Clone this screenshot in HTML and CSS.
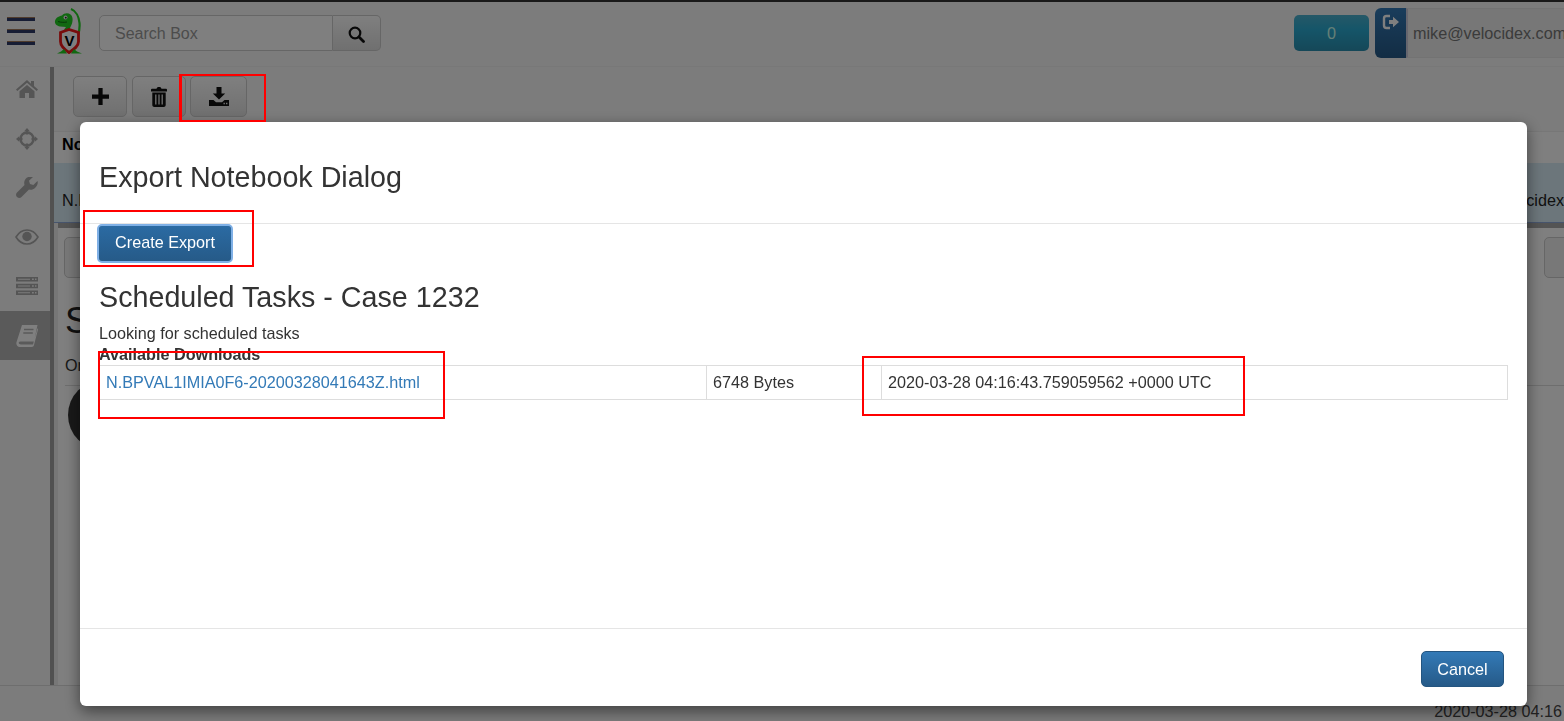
FILE: index.html
```html
<!DOCTYPE html>
<html lang="en">
<head>
<meta charset="utf-8">
<title>Export Notebook Dialog</title>
<link rel="stylesheet" href="styles.css">
</head>
<body>
<div class="app">
  <header class="topbar">
    <div class="burger"><span></span><span></span><span></span></div>
    <svg class="logo" viewBox="0 0 28 46" width="28" height="46">
      <path d="M17 1c5 2 8 8 8.500 14 .3 4 0 8-1.500 12" fill="none" stroke="#22d022" stroke-width="2.200"/>
      <path d="M1 13c.5-3 4-5 7-5.500 2-2.500 6-3 8.500-1 2.500 2 2.500 6 1.500 9-1 3-2.500 5-3.500 7l-3 .5c-1 0-1.500-.5-1-2l1.500-2-6-.5C3 18 .5 16 1 13z" fill="#22d022"/>
      <circle cx="11.500" cy="9.500" r="2" fill="#f0f0f0"/>
      <circle cx="11.800" cy="9.700" r=".9" fill="#222"/>
      <path d="M4 13.500c3 1 6 1 9 .5" fill="none" stroke="#0a400a" stroke-width=".7"/>
      <path d="M6.500 24.500l8.500-3 9.500 3v9c0 5-5 8-9.500 11-4.500-3-8.500-6-8.500-11z" fill="#fff" stroke="#f01818" stroke-width="2.800"/>
      <text x="15.500" y="37.500" class="logo-v">V</text>
      <path d="M3 45.500l4-2 3-2.500 3 4.500zM17 45.500l3-4.500 3 2.500 5 2z" fill="#22d022"/>
    </svg>
    <div class="search">
      <div class="search-input">Search Box</div>
      <div class="search-btn">
        <svg viewBox="0 0 17 17" width="17" height="17"><circle cx="7" cy="7" r="5.300" fill="none" stroke="#111" stroke-width="2.200"/><path d="M11 11l4.500 4.500" stroke="#111" stroke-width="2.800" stroke-linecap="round"/></svg>
      </div>
    </div>
    <div class="top-right">
      <div class="count">0</div>
      <div class="user">
        <div class="logout">
          <svg viewBox="0 0 18 18" width="18" height="18"><path d="M8 3H4.500C3 3 2 4 2 5.500v7C2 14 3 15 4.500 15H8" fill="none" stroke="#fff" stroke-width="2.400"/><path d="M7 7h4V3.800L17 9l-6 5.200V11H7z" fill="#fff"/></svg>
        </div>
        <div class="user-name">mike@velocidex.com</div>
      </div>
    </div>
  </header>
  <div class="middle">
    <nav class="sidebar">
      <div class="nav-item"><svg viewBox="0 0 22 20" width="22" height="20"><path d="M11 1L0 10.500l1.300 1.500L11 3.800l9.700 8.200 1.300-1.500-4-3.500V2h-3v2.800z" fill="#aaa"/><path d="M3.500 12.200L11 6l7.500 6.200V19h-5.500v-5H9v5H3.500z" fill="#aaa"/></svg></div>
      <div class="nav-item"><svg viewBox="0 0 22 22" width="22" height="22"><path d="M11 0l2.800 3.200h-1.600v3.300H9.800V3.200H8.200zM11 22l-2.800-3.200h1.600v-3.300h2.400v3.300h1.600zM0 11l3.200-2.800v1.600h3.300v2.400H3.200v1.600zM22 11l-3.200 2.800v-1.600h-3.300V9.800h3.300V8.200z" fill="#aaa"/><circle cx="11" cy="11" r="6.500" fill="none" stroke="#aaa" stroke-width="2.400"/></svg></div>
      <div class="nav-item"><svg viewBox="0 0 22 22" width="22" height="22"><path d="M21.500 4l-4.200 4-3.300-1-1-3.300L17 0c-3-1-6 0-7.500 2C8 4 8 6.500 8.500 8L1 15.500c-1.300 1.300-1.300 3 0 4.500 1.500 1.300 3.200 1.300 4.500 0L13 12.500c1.800.6 4.200.3 6-1.500 2-1.800 3.300-4.500 2.500-7z" fill="#aaa"/></svg></div>
      <div class="nav-item"><svg viewBox="0 0 24 16" width="24" height="16"><path d="M1 8C4 3 8 1 12 1s8 2 11 7c-3 5-7 7-11 7S4 13 1 8z" fill="none" stroke="#aaa" stroke-width="1.600"/><circle cx="12" cy="7.500" r="4.700" fill="#aaa"/></svg></div>
      <div class="nav-item"><svg viewBox="0 0 22 20" width="22" height="20"><path d="M0 1h22v4.500H0zM0 7.700h22v4.500H0zM0 14.500h22V19H0z" fill="#aaa"/><path d="M16 2.500h1.800v1.500H16zM19 2.500h1.500v1.500H19zM16 9.200h1.800v1.500H16zM19 9.200h1.500v1.500H19zM16 16h1.800v1.500H16zM19 16h1.500v1.500H19zM2 2.800h12v1H2zM2 9.500h12v1H2zM2 16.300h12v1H2z" fill="#f8f8f8"/></svg></div>
      <div class="nav-item active"><svg viewBox="0 0 22 22" width="22" height="22"><path d="M6 0h15.500L18 16.500H4.500c-1.500 0-2 1-1.700 1.800.2.700 1 1.200 2 1.200H17L21.500 3 22 4.500 18 20c-.2 1.200-1 2-2.500 2H4c-2.300 0-4-2-3.600-4.500z" fill="#fff"/><path d="M8 4.500h9.500M7.300 8h9.500" stroke="#b4b4b4" stroke-width="1.500"/></svg></div>
    </nav>
    <main class="content">
      <div class="toolbar">
        <button class="tool tool-a"><svg viewBox="0 0 16 16" width="17" height="17"><path d="M6 0h4v6h6v4h-6v6H6v-6H0V6h6z" fill="#111"/></svg></button>
        <button class="tool tool-a"><svg viewBox="0 0 16 20" width="16" height="20"><path d="M5.500 1.700C6 .5 6.500 0 7.500 0h1c1 0 1.500.5 2 1.700H15a1 1 0 0 1 1 1V4.500H0V2.700a1 1 0 0 1 1-1z" fill="#111"/><path d="M1.300 5.500h13.400V18c0 1.100-.9 2-2 2H3.300c-1.100 0-2-.9-2-2z" fill="#111"/><path d="M4.800 7.500v10M8 7.500v10M11.200 7.500v10" stroke="#e4e4e4" stroke-width="1.300"/></svg></button>
        <button class="tool tool-b"><svg viewBox="0 0 20 19" width="20" height="19"><path d="M7.500 0h5v6.500h3.700L10 12.500 3.800 6.500h3.700z" fill="#111"/><path d="M0 13h4.500l2.500 2.300h6L15.500 13H20v6H0z" fill="#111"/><path d="M14.500 15.800h1.400v1.400h-1.400zM17 15.800h1.400v1.400H17z" fill="#e4e4e4"/></svg></button>
      </div>
      <div class="notebook-head">Notebook</div>
      <div class="notebook-row"><span>N.BPVAL1</span><span>mike@velocidex</span></div>
      <section class="cell">
        <div class="cell-bar"><div class="cell-btn"></div><div class="cell-btn cell-btn-r"></div></div>
        <h1 class="cell-title">Scheduled</h1>
        <p class="cell-text">On</p>
        <hr class="cell-rule">
        <div class="avatar"></div>
      </section>
    </main>
  </div>
  <footer class="statusbar">2020-03-28 04:16</footer>
</div>

<div class="backdrop"></div>

<div class="modal">
  <div class="modal-head"><h3 class="modal-title">Export Notebook Dialog</h3></div>
  <div class="modal-body">
    <button class="btn-create">Create Export</button>
    <h2 class="report-title">Scheduled Tasks - Case 1232</h2>
    <div class="report-line">Looking for scheduled tasks</div>
    <div class="report-strong">Available Downloads</div>
    <table class="downloads">
      <tr>
        <td class="col-name"><a href="#">N.BPVAL1IMIA0F6-20200328041643Z.html</a></td>
        <td class="col-size">6748 Bytes</td>
        <td>2020-03-28 04:16:43.759059562 +0000 UTC</td>
      </tr>
    </table>
  </div>
  <div class="modal-foot"><button class="btn-cancel">Cancel</button></div>
</div>

<div class="mark mark-1"></div>
<div class="mark mark-2"></div>
<div class="mark mark-3"></div>
<div class="mark mark-4"></div>
</body>
</html>
```

FILE: styles.css
```css
* { box-sizing: border-box; }
html, body { margin: 0; height: 100%; overflow: hidden; }
body { font-family: "Liberation Sans", Arial, sans-serif; font-size: 16.2px; color: #333; background: #fff; }

.app { height: 721px; display: flex; flex-direction: column; border-top: 2px solid #333; }

.topbar { height: 65px; flex: none; display: flex; align-items: flex-start; background: #f8f8f8; border-bottom: 1px solid #f0f0f0; }
.burger { width: 28px; margin: 15px 0 0 7px; display: flex; flex-direction: column; gap: 8px; }
.burger span { height: 4px; background: #2e3a68; border-top: 1px solid #a0795a; }
.logo { margin: 6px 0 0 19px; flex: none; }
.logo-v { font-family: "Liberation Sans", sans-serif; font-size: 15px; font-weight: 700; fill: #000; text-anchor: middle; }
.search { display: flex; margin: 13px 0 0 17px; height: 36px; }
.search-input { width: 234px; padding: 9px 15px; font-size: 16px; color: #999; background: #fff; border: 1px solid #ccc; border-radius: 5px 0 0 5px; }
.search-btn { width: 48px; display: flex; align-items: center; justify-content: center; padding-top: 2px; border: 1px solid #ccc; border-left: 0; border-radius: 0 5px 5px 0; background: linear-gradient(#fff, #e0e0e0); }
.top-right { margin-left: auto; display: flex; align-items: flex-start; }
.count { width: 75px; height: 36px; margin: 13px 6px 0 0; border-radius: 5px; background: linear-gradient(#4cb1cf, #2aabd2 40%, #2b8fb0); color: #cfe; text-align: center; line-height: 36px; }
.user { display: flex; height: 50px; margin-top: 6px; width: 189px; }
.logout { width: 31px; height: 50px; flex: none; border-radius: 6px 0 0 6px; background: linear-gradient(#337ab7, #265a88); padding: 5px 0 0 7px; }
.user-name { flex: 1; white-space: nowrap; background: #eee; padding: 15px 0 0 5px; color: #777; border: 1px solid #e6e6e6; border-left: 2px solid #ccd; }

.middle { flex: 1; display: flex; min-height: 0; }
.sidebar { width: 54px; flex: none; background: #f8f8f8; border-right: 4px solid #a2a2a2; }
.nav-item { height: 49px; display: flex; align-items: center; justify-content: center; padding-left: 3px; }
.nav-item:first-child { margin-top: -3px; margin-bottom: 1px; }
.nav-item.active { background: #b4b4b4; margin-top: 1px; }

.content { flex: 1; min-width: 0; overflow: hidden; background: #eee; }
.toolbar { height: 65px; display: flex; gap: 5px; padding: 9px 0 0 19px; background: #f8f8f8; border-bottom: 1px solid #eee; }
.tool { height: 41px; border: 1px solid #ccc; border-radius: 5px; background: linear-gradient(#fff, #e0e0e0); display: flex; align-items: center; justify-content: center; padding: 0; }
.tool-a { width: 54px; }
.tool-b { width: 57px; margin-left: -1px; }
.notebook-head { height: 31px; padding: 3px 8px; font-weight: 700; color: #000; background: #fff; white-space: nowrap; }
.notebook-row { height: 60px; padding: 28px 0 0 8px; display: flex; justify-content: space-between; background: #d9edf7; border-bottom: 1px solid #8fa8d8; color: #222; white-space: nowrap; }
.cell { margin-left: 4px; border-top: 5px solid #a8a8a8; background: #fff; padding: 9px 0 0 6px; height: 500px; }
.cell-bar { display: flex; justify-content: space-between; }
.cell-btn { width: 60px; height: 41px; border: 1px solid #ccc; border-radius: 5px; background: #f0f0f0; }
.cell-btn-r { margin-right: -40px; }
.cell-title { margin: 23px 0 0 1px; font-size: 36px; font-weight: 400; color: #222; line-height: 40px; }
.cell-text { margin: 14px 0 0 1px; line-height: 20px; }
.cell-rule { margin: 10px 0 0 1px; border: 0; border-top: 1px solid #ddd; }
.avatar { width: 70px; height: 70px; margin: -6px 0 0 4px; border-radius: 50%; background: #333; }

.statusbar { height: 36px; flex: none; margin-top: -2px; background: #f8f8f8; border-top: 1px solid #ddd; padding: 16px 2px 0 0; text-align: right; color: #444; white-space: nowrap; }

.backdrop { position: fixed; inset: 0; background: rgba(0, 0, 0, .5); }

.modal { position: fixed; left: 80px; top: 122px; width: 1447px; height: 584px; display: flex; flex-direction: column; background: #fff; border-radius: 6px; box-shadow: 0 5px 15px rgba(0, 0, 0, .5); }
.modal-head { height: 102px; flex: none; padding: 37px 19px 0; border-bottom: 1px solid #e5e5e5; }
.modal-title { margin: 0; font-size: 28.7px; font-weight: 400; line-height: 36px; color: #333; }
.modal-body { flex: 1; padding: 1px 19px 0; min-height: 0; }
.btn-create { display: block; width: 134px; height: 37px; margin-left: -1px; padding: 0 0 2px; font: inherit; color: #fff; border: 1px solid #245580; border-radius: 4px; background: linear-gradient(#2b6ba3, #265a88); outline: 2px solid #7fb0e6; outline-offset: -1px; }
.report-title { margin: 17px 0 0; font-size: 28.7px; font-weight: 400; line-height: 36px; color: #333; }
.report-line { margin-top: 8px; line-height: 20px; }
.report-strong { font-weight: 700; line-height: 20px; margin-top: 1px; }
.downloads { width: 1409px; margin-top: 1px; border-collapse: collapse; table-layout: fixed; }
.downloads td { height: 34px; padding: 0 6px; border: 1px solid #ddd; }
.col-name { width: 607px; }
.col-size { width: 175px; }
.downloads a { color: #337ab7; text-decoration: none; }
.modal-foot { height: 78px; flex: none; padding: 22px 23px 0 0; border-top: 1px solid #e5e5e5; text-align: right; }
.btn-cancel { width: 83px; height: 36px; padding: 0; font: inherit; color: #fff; border: 1px solid #245580; border-radius: 5px; background: linear-gradient(#337ab7, #265a88); }

.mark { position: fixed; border: 2px solid #f00; }
.mark-1 { left: 179px; top: 74px; width: 87px; height: 48px; border-left-width: 3px; }
.mark-2 { left: 83px; top: 210px; width: 171px; height: 57px; }
.mark-3 { left: 98px; top: 351px; width: 347px; height: 68px; }
.mark-4 { left: 862px; top: 356px; width: 383px; height: 60px; }
```
